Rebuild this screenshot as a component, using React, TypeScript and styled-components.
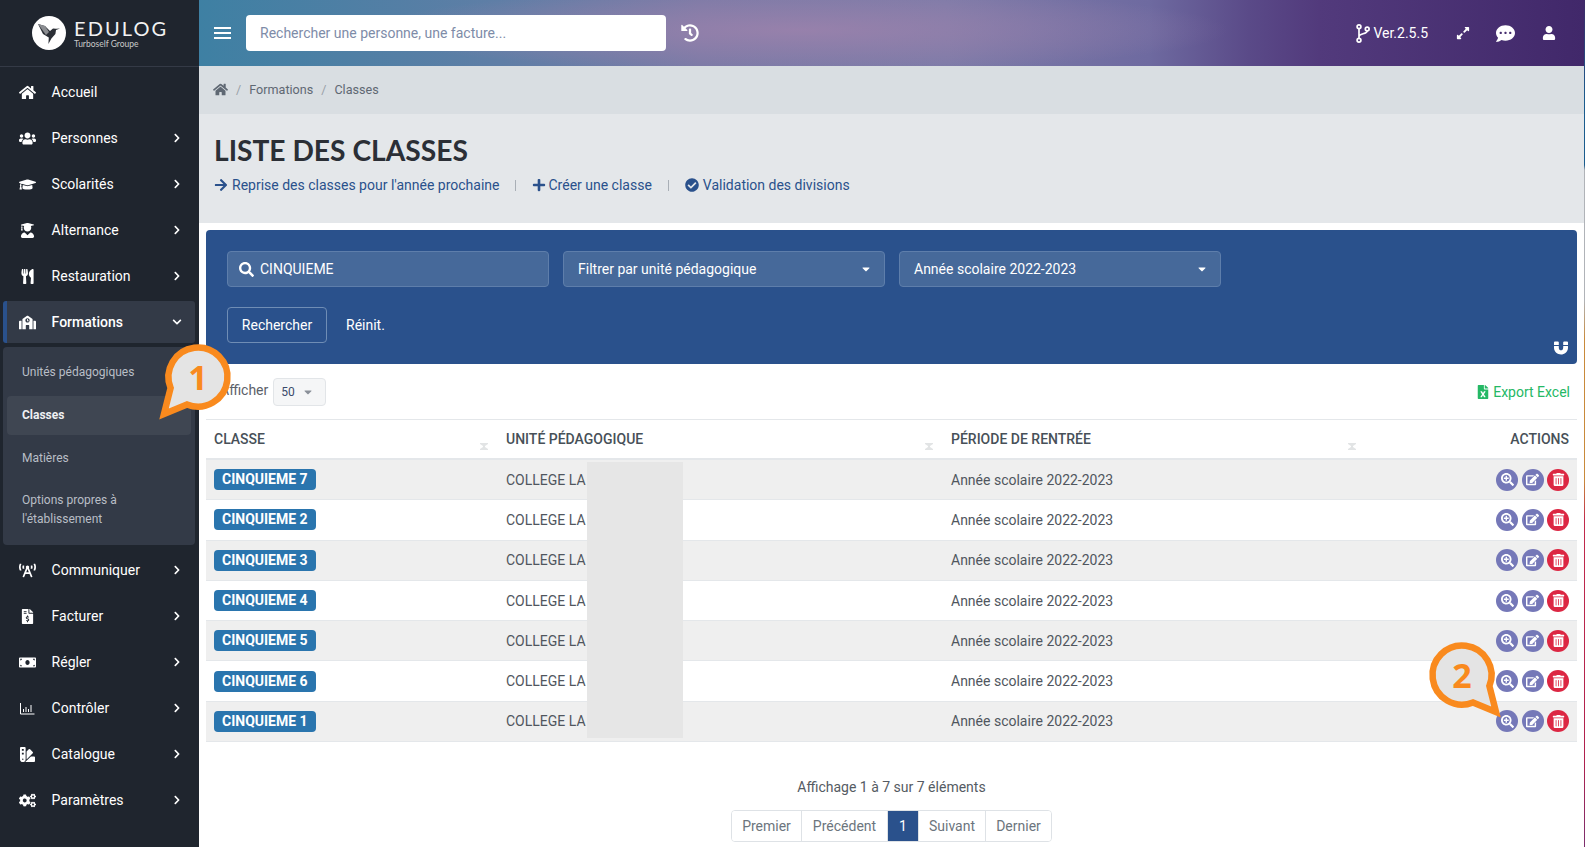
import styled, { createGlobalStyle } from "styled-components"
import {
  FaArrowRight,
  FaBroadcastTower,
  FaCaretDown,
  FaCheckCircle,
  FaChevronDown,
  FaChevronRight,
  FaCogs,
  FaCommentDots,
  FaEdit,
  FaExpandAlt,
  FaFileExcel,
  FaFileInvoiceDollar,
  FaGraduationCap,
  FaHistory,
  FaHome,
  FaMagnet,
  FaMoneyBill,
  FaPlus,
  FaSchool,
  FaSearch,
  FaSearchPlus,
  FaSwatchbook,
  FaTrashAlt,
  FaUser,
  FaUserGraduate,
  FaUsers,
  FaUtensils,
} from "react-icons/fa"

const BLUE = "#2a518c"

const GlobalStyle = createGlobalStyle`
  html, body {
    margin: 0;
    padding: 0;
    height: 100%;
    overflow: hidden;
    background: #fff;
    font-family: Roboto, "Liberation Sans", sans-serif;
  }
  * { box-sizing: border-box; }
`

const Shell = styled.div`
  position: relative;
  display: flex;
  width: 1585px;
  height: 847px;
  overflow: hidden;
`

const EdgeStrip = styled.div`
  width: 1px;
  background: linear-gradient(
    180deg,
    #3d2a66 0,
    #1a5c8e 100px,
    #1a5c8e 165px,
    #b0b3b8 170px,
    #b0b3b8 300px,
    #c98a3a 340px,
    #c98a3a 480px,
    #c22a4c 520px,
    #b0204e 760px,
    #7c2f6e 847px
  );
`

/* sidebar */

const Sidebar = styled.aside`
  width: 199px;
  flex: none;
  background: #1f252e;
  color: #fff;
`

const LogoBar = styled.div`
  height: 67px;
  padding: 16px 0 0 32px;
  display: flex;
  gap: 8px;
  border-bottom: 1px solid #343a46;
`

const LogoMark = styled.svg`
  width: 34px;
  height: 34px;
  flex: none;
`

const LogoText = styled.div`
  display: flex;
  flex-direction: column;
`

const LogoName = styled.span`
  font-family: Lato, sans-serif;
  font-size: 20px;
  line-height: 24px;
  letter-spacing: 2.1px;
  color: #f2f2f2;
`

const LogoSub = styled.span`
  font-family: Lato, sans-serif;
  font-size: 8.5px;
  line-height: 9px;
  color: #c9c9c9;
`

const NavList = styled.nav`
  padding-top: 2px;
  display: flex;
  flex-direction: column;
`

const NavItem = styled.div<{ $active?: boolean }>`
  display: flex;
  align-items: center;
  height: ${(p) => (p.$active ? 42 : 46)}px;
  margin: ${(p) => (p.$active ? "2px 4px 4px 3px" : "0")};
  padding: ${(p) => (p.$active ? "0 13px 0 11px" : "0 17px 0 18px")};
  border-left: ${(p) => (p.$active ? `4px solid ${BLUE}` : "none")};
  border-radius: ${(p) => (p.$active ? "3px" : "0")};
  background: ${(p) => (p.$active ? "#333a47" : "transparent")};
  font-size: 14px;
  font-weight: ${(p) => (p.$active ? 500 : 400)};
  color: #fff;
`

const NavIcon = styled.span`
  width: 18px;
  height: 18px;
  flex: none;
  display: flex;
  align-items: center;
  justify-content: center;
  font-size: 17px;
`

const NavLabel = styled.span`
  margin-left: 15.6px;
  flex: 1;
`

const Chevron = styled.span`
  display: flex;
  font-size: 10px;
`

const SubMenu = styled.div`
  margin: 0 4px 2px 3px;
  padding: 6px 4px 8px;
  height: 198px;
  background: #333a47;
  border-radius: 4px;
  display: flex;
  flex-direction: column;
  gap: 4px;
`

const SubItem = styled.div<{ $current?: boolean; $tall?: boolean }>`
  min-height: 39px;
  padding: ${(p) => (p.$tall ? "9px 10px 7px 15px" : "8px 10px 8px 15px")};
  display: flex;
  align-items: center;
  border-radius: 4px;
  font-size: 12px;
  line-height: 19px;
  font-weight: ${(p) => (p.$current ? 700 : 400)};
  color: ${(p) => (p.$current ? "#eef0f2" : "#b9bec6")};
  background: ${(p) => (p.$current ? "#3f4652" : "transparent")};
`

/* top bar */

const Main = styled.main`
  flex: 1;
  min-width: 0;
  display: flex;
  flex-direction: column;
`

const TopBar = styled.header`
  height: 66px;
  flex: none;
  display: flex;
  align-items: center;
  padding: 0 28px 0 15px;
  color: #fff;
  background:
    radial-gradient(ellipse 430px 42px at 600px 30px, rgba(156, 130, 172, 0.85), rgba(156, 130, 172, 0) 100%),
    linear-gradient(90deg, #3e80a3 0, #5f7ea6 300px, #7a7aa6 500px, #7d7ba8 750px, #6e6aa0 950px, #5a4a88 1050px, #523a7c 1120px, #41286a 1385px);
`

const MenuLines = styled.svg`
  width: 17px;
  height: 12px;
  flex: none;
`

const GlobalSearch = styled.div`
  width: 420px;
  height: 36px;
  margin-left: 15px;
  padding-left: 14px;
  display: flex;
  align-items: center;
  background: #fff;
  border-radius: 4px;
  color: #7e8ca8;
  font-size: 14px;
`

const HistoryButton = styled.span`
  display: flex;
  margin-left: 15px;
  font-size: 18px;
`

const TopActions = styled.div`
  margin-left: auto;
  display: flex;
  align-items: center;
`

const Version = styled.span`
  display: flex;
  align-items: center;
  gap: 3px;
  font-size: 14px;
`

const TopIcon = styled.span<{ $size: number; $gap: number }>`
  display: flex;
  margin-left: ${(p) => p.$gap}px;
  font-size: ${(p) => p.$size}px;
`

/* heading */

const Breadcrumb = styled.div`
  height: 48px;
  flex: none;
  padding: 0 0 2px 14px;
  display: flex;
  align-items: center;
  background: #d9dee2;
  color: #5f6873;
  font-size: 12.6px;
`

const CrumbSep = styled.span`
  margin: 0 8px;
  color: #9aa1a8;
`

const TitleBlock = styled.div`
  height: 109px;
  flex: none;
  padding: 17px 0 0 15px;
  background: #e4e7ea;
`

const Title = styled.h1`
  margin: 0;
  font-family: Lato, sans-serif;
  font-size: 28.2px;
  line-height: 38px;
  font-weight: 700;
  color: #2b2f36;
`

const PageLinks = styled.div`
  margin-top: 6px;
  display: flex;
  align-items: center;
  font-size: 14px;
  line-height: 20px;
  color: ${BLUE};
`

const PageLink = styled.span<{ $gap?: number }>`
  display: flex;
  align-items: center;
  gap: ${(p) => p.$gap ?? 4}px;
  svg {
    font-size: 14px;
  }
`

const LinkSep = styled.span`
  width: 1px;
  height: 11px;
  margin: 1px 16px 0;
  background: #a9afb6;
`

/* filters */

const Content = styled.div`
  padding: 7px 7px 0;
`

const FilterPanel = styled.section`
  position: relative;
  height: 134px;
  padding: 21px;
  background: ${BLUE};
  border-radius: 4px;
  color: #fff;
`

const FilterRow = styled.div`
  display: flex;
  gap: 14px;
`

const FilterField = styled.div`
  width: 322px;
  height: 36px;
  padding: 0 12px 0 14px;
  display: flex;
  align-items: center;
  justify-content: space-between;
  background: #46699a;
  border: 1px solid #5e7eab;
  border-radius: 4px;
  font-size: 14px;
`

const SearchValue = styled.span`
  display: flex;
  align-items: center;
  gap: 6px;
  margin-left: -3px;
  svg {
    font-size: 15px;
  }
`

const FieldCaret = styled.span`
  display: flex;
  font-size: 12px;
`

const FilterActions = styled.div`
  margin-top: 20px;
  display: flex;
  align-items: center;
  font-size: 14px;
`

const SearchButton = styled.div`
  width: 100px;
  height: 36px;
  display: flex;
  align-items: center;
  justify-content: center;
  border: 1px solid #6f8db5;
  border-radius: 4px;
`

const ResetLink = styled.span`
  margin-left: 19px;
`

const MagnetIcon = styled.span`
  position: absolute;
  right: 9px;
  bottom: 9px;
  display: flex;
  font-size: 14px;
`

/* table */

const TableTools = styled.div`
  height: 55px;
  padding: 0 7px 0 14px;
  display: flex;
  align-items: center;
  justify-content: space-between;
  font-size: 14px;
  color: #5b6169;
`

const PageSize = styled.div`
  display: flex;
  align-items: center;
  gap: 5px;
`

const SizeLabel = styled.span`
  margin-bottom: 4px;
`

const SizeSelect = styled.div`
  width: 53px;
  height: 28px;
  margin-top: 1px;
  padding: 0 7px;
  display: flex;
  align-items: center;
  gap: 7px;
  background: #f5f6f7;
  border: 1px solid #e2e5e8;
  border-radius: 4px;
  font-size: 12px;
  color: #3a4a6b;
  svg {
    color: #8a9099;
    font-size: 12px;
  }
`

const ExportLink = styled.span`
  display: flex;
  align-items: center;
  gap: 3px;
  color: #25b865;
  svg {
    font-size: 14px;
  }
`

const Row = styled.div`
  display: grid;
  grid-template-columns: 292px 445px 423px 1fr;
  align-items: center;
`

const HeadRow = styled(Row)`
  height: 41px;
  border-top: 1px solid #e4e7ea;
  border-bottom: 2px solid #e4e7ea;
`

const HeadCell = styled.div<{ $right?: boolean }>`
  height: 100%;
  padding: 0 10px 0 8px;
  padding-right: ${(p) => (p.$right ? 8 : 10)}px;
  display: flex;
  align-items: center;
  justify-content: ${(p) => (p.$right ? "flex-end" : "space-between")};
  font-size: 14px;
  font-weight: 500;
  color: #475058;
`

const SortMark = styled.svg`
  width: 8px;
  height: 7px;
  margin-top: 14px;
  fill: #e2e4e5;
`

const TableBody = styled.div`
  position: relative;
`

const BodyRow = styled(Row)<{ $odd: boolean }>`
  height: 40.3px;
  border-bottom: 1px solid #e4e7ea;
  background: ${(p) => (p.$odd ? "#efefef" : "#fff")};
  font-size: 14px;
  color: #50565e;
`

const Cell = styled.div`
  padding: 0 8px;
`

const ClassBadge = styled.span`
  display: inline-block;
  padding: 0 8px;
  height: 21px;
  line-height: 21px;
  background: #2a75ae;
  border-radius: 4px;
  color: #fff;
  font-weight: 700;
  font-size: 14px;
`

const Actions = styled.div`
  padding-right: 8px;
  display: flex;
  justify-content: flex-end;
  gap: 3.5px;
`

const ActionButton = styled.span<{ $danger?: boolean }>`
  width: 22px;
  height: 22px;
  display: flex;
  align-items: center;
  justify-content: center;
  border-radius: 50%;
  color: #fff;
  font-size: 13px;
  background: ${(p) => (p.$danger ? "#dc2743" : "#7578b8")};
`

const Redaction = styled.div`
  position: absolute;
  top: 2px;
  left: 381px;
  width: 96px;
  height: 276px;
  background: #e6e6e6;
`

/* footer */

const TableFooter = styled.div`
  padding-top: 35px;
  display: flex;
  flex-direction: column;
  align-items: center;
  gap: 13px;
  font-size: 14px;
  line-height: 20px;
  color: #555b63;
`

const Pager = styled.div`
  display: flex;
  height: 32px;
  border: 1px solid #dee2e6;
  border-radius: 4px;
  overflow: hidden;
`

const PageButton = styled.span<{ $width: number; $active?: boolean }>`
  width: ${(p) => p.$width}px;
  display: flex;
  align-items: center;
  justify-content: center;
  color: ${(p) => (p.$active ? "#fff" : "#6c757d")};
  background: ${(p) => (p.$active ? BLUE : "#fff")};
  & + & {
    border-left: 1px solid #dee2e6;
  }
`

/* tutorial callouts */

const Callout = styled.div<{ $left: number; $top: number }>`
  position: absolute;
  left: ${(p) => p.$left}px;
  top: ${(p) => p.$top}px;
  width: 90px;
  height: 90px;
  display: flex;
  align-items: center;
  justify-content: center;
  font-family: "Open Sans", sans-serif;
  font-size: 34px;
  font-weight: 700;
  color: #f98a1e;
`

const CalloutShape = styled.svg<{ $flip?: boolean }>`
  position: absolute;
  inset: 0;
  overflow: visible;
  transform: ${(p) => (p.$flip ? "scaleX(-1)" : "none")};
`

const CalloutNumber = styled.span`
  position: relative;
`

function Bubble({ n, left, top, flip }: { n: number; left: number; top: number; flip?: boolean }) {
  return (
    <Callout $left={left} $top={top}>
      <CalloutShape $flip={flip} viewBox="-45 -45 90 90" width="90" height="90">
        <path
          d="M11 27.4A29.5 29.5 0 1 1 27.4 11L34 37Z"
          fill="#e4e4e4"
          stroke="#f98a1e"
          strokeWidth="6.5"
          strokeMiterlimit="10"
        />
      </CalloutShape>
      <CalloutNumber>{n}</CalloutNumber>
    </Callout>
  )
}

const navTop = [
  { label: "Accueil", icon: <FaHome /> },
  { label: "Personnes", icon: <FaUsers />, more: true },
  { label: "Scolarités", icon: <FaGraduationCap />, more: true },
  { label: "Alternance", icon: <FaUserGraduate size={15} />, more: true },
  { label: "Restauration", icon: <FaUtensils size={15} />, more: true },
]

const ChartIcon = () => (
  <svg width="15" height="13" viewBox="0 0 15 13" fill="none" stroke="#fff" strokeWidth="1">
    <path d="M.5 1v11h14M3.5 10V7M6 10V5M8.5 10V7M11 10V3" />
  </svg>
)

const navBottom = [
  { label: "Communiquer", icon: <FaBroadcastTower /> },
  { label: "Facturer", icon: <FaFileInvoiceDollar size={15} /> },
  { label: "Régler", icon: <FaMoneyBill /> },
  { label: "Contrôler", icon: <ChartIcon /> },
  { label: "Catalogue", icon: <FaSwatchbook size={15} /> },
  { label: "Paramètres", icon: <FaCogs /> },
]

const classes = [7, 2, 3, 4, 5, 6, 1]

const SortIcon = () => (
  <SortMark viewBox="0 0 8 7">
    <path d="M0 0h8v1L5 3v1l3 2v1H0V6l3-2V3L0 1z" />
  </SortMark>
)

function App() {
  return (
    <Shell>
      <GlobalStyle />
      <Sidebar>
        <LogoBar>
          <LogoMark viewBox="0 0 34 34">
            <circle cx="17" cy="17" r="17" fill="#fff" />
            <path d="M6 8l7 2 5 5 3-2.5 3 .2 4-.2-4 1.6-.6 4-4 4.4-3 5.5.4-6.5L11 18z" fill="#2b2f36" />
            <path d="M6 8l7 2 4 6-3 3z" fill="#8b8d91" />
          </LogoMark>
          <LogoText>
            <LogoName>EDULOG</LogoName>
            <LogoSub>Turboself Groupe</LogoSub>
          </LogoText>
        </LogoBar>
        <NavList>
          {navTop.map((item) => (
            <NavItem key={item.label}>
              <NavIcon>{item.icon}</NavIcon>
              <NavLabel>{item.label}</NavLabel>
              {item.more && (
                <Chevron>
                  <FaChevronRight />
                </Chevron>
              )}
            </NavItem>
          ))}
          <NavItem $active>
            <NavIcon>
              <FaSchool />
            </NavIcon>
            <NavLabel>Formations</NavLabel>
            <Chevron>
              <FaChevronDown />
            </Chevron>
          </NavItem>
          <SubMenu>
            <SubItem>Unités pédagogiques</SubItem>
            <SubItem $current>Classes</SubItem>
            <SubItem>Matières</SubItem>
            <SubItem $tall>
              Options propres à
              <br />
              l'établissement
            </SubItem>
          </SubMenu>
          {navBottom.map((item) => (
            <NavItem key={item.label}>
              <NavIcon>{item.icon}</NavIcon>
              <NavLabel>{item.label}</NavLabel>
              <Chevron>
                <FaChevronRight />
              </Chevron>
            </NavItem>
          ))}
        </NavList>
      </Sidebar>

      <Main>
        <TopBar>
          <MenuLines viewBox="0 0 17 12" fill="none" stroke="#fff" strokeWidth="1.8">
            <path d="M0 1h17M0 6h17M0 11h17" />
          </MenuLines>
          <GlobalSearch>Rechercher une personne, une facture...</GlobalSearch>
          <HistoryButton>
            <FaHistory />
          </HistoryButton>
          <TopActions>
            <Version>
              <svg width="14" height="19" viewBox="0 0 14 19" fill="none" stroke="#fff" strokeWidth="1.7">
                <circle cx="3" cy="2.8" r="1.9" />
                <circle cx="3" cy="16.2" r="1.9" />
                <circle cx="11.2" cy="5" r="1.9" />
                <path d="M3 4.7v9.6M3 12.5c0-3 8.2-2.5 8.2-5.6" />
              </svg>
              Ver.2.5.5
            </Version>
            <TopIcon $size={14} $gap={28}>
              <FaExpandAlt />
            </TopIcon>
            <TopIcon $size={19} $gap={26}>
              <FaCommentDots />
            </TopIcon>
            <TopIcon $size={14} $gap={27}>
              <FaUser />
            </TopIcon>
          </TopActions>
        </TopBar>

        <Breadcrumb>
          <FaHome size={15} />
          <CrumbSep>/</CrumbSep>
          Formations
          <CrumbSep>/</CrumbSep>
          Classes
        </Breadcrumb>

        <TitleBlock>
          <Title>LISTE DES CLASSES</Title>
          <PageLinks>
            <PageLink>
              <FaArrowRight />
              Reprise des classes pour l'année prochaine
            </PageLink>
            <LinkSep />
            <PageLink $gap={2}>
              <FaPlus />
              Créer une classe
            </PageLink>
            <LinkSep />
            <PageLink>
              <FaCheckCircle />
              Validation des divisions
            </PageLink>
          </PageLinks>
        </TitleBlock>

        <Content>
          <FilterPanel>
            <FilterRow>
              <FilterField>
                <SearchValue>
                  <FaSearch />
                  CINQUIEME
                </SearchValue>
              </FilterField>
              <FilterField>
                Filtrer par unité pédagogique
                <FieldCaret>
                  <FaCaretDown />
                </FieldCaret>
              </FilterField>
              <FilterField>
                Année scolaire 2022-2023
                <FieldCaret>
                  <FaCaretDown />
                </FieldCaret>
              </FilterField>
            </FilterRow>
            <FilterActions>
              <SearchButton>Rechercher</SearchButton>
              <ResetLink>Réinit.</ResetLink>
            </FilterActions>
            <MagnetIcon>
              <FaMagnet />
            </MagnetIcon>
          </FilterPanel>

          <TableTools>
            <PageSize>
              <SizeLabel>Afficher</SizeLabel>
              <SizeSelect>
                50
                <FaCaretDown />
              </SizeSelect>
            </PageSize>
            <ExportLink>
              <FaFileExcel />
              Export Excel
            </ExportLink>
          </TableTools>

          <HeadRow>
            <HeadCell>
              CLASSE
              <SortIcon />
            </HeadCell>
            <HeadCell>
              UNITÉ PÉDAGOGIQUE
              <SortIcon />
            </HeadCell>
            <HeadCell>
              PÉRIODE DE RENTRÉE
              <SortIcon />
            </HeadCell>
            <HeadCell $right>ACTIONS</HeadCell>
          </HeadRow>
          <TableBody>
            {classes.map((n, i) => (
              <BodyRow key={n} $odd={i % 2 === 0}>
                <Cell>
                  <ClassBadge>CINQUIEME {n}</ClassBadge>
                </Cell>
                <Cell>COLLEGE LA</Cell>
                <Cell>Année scolaire 2022-2023</Cell>
                <Actions>
                  <ActionButton>
                    <FaSearchPlus />
                  </ActionButton>
                  <ActionButton>
                    <FaEdit />
                  </ActionButton>
                  <ActionButton $danger>
                    <FaTrashAlt />
                  </ActionButton>
                </Actions>
              </BodyRow>
            ))}
            <Redaction />
          </TableBody>

          <TableFooter>
            Affichage 1 à 7 sur 7 éléments
            <Pager>
              <PageButton $width={69}>Premier</PageButton>
              <PageButton $width={86}>Précédent</PageButton>
              <PageButton $width={31} $active>
                1
              </PageButton>
              <PageButton $width={67}>Suivant</PageButton>
              <PageButton $width={66}>Dernier</PageButton>
            </Pager>
          </TableFooter>
        </Content>
      </Main>
      <EdgeStrip />

      <Bubble n={1} left={153} top={332} flip />
      <Bubble n={2} left={1417} top={630} />
    </Shell>
  )
}

export default App
